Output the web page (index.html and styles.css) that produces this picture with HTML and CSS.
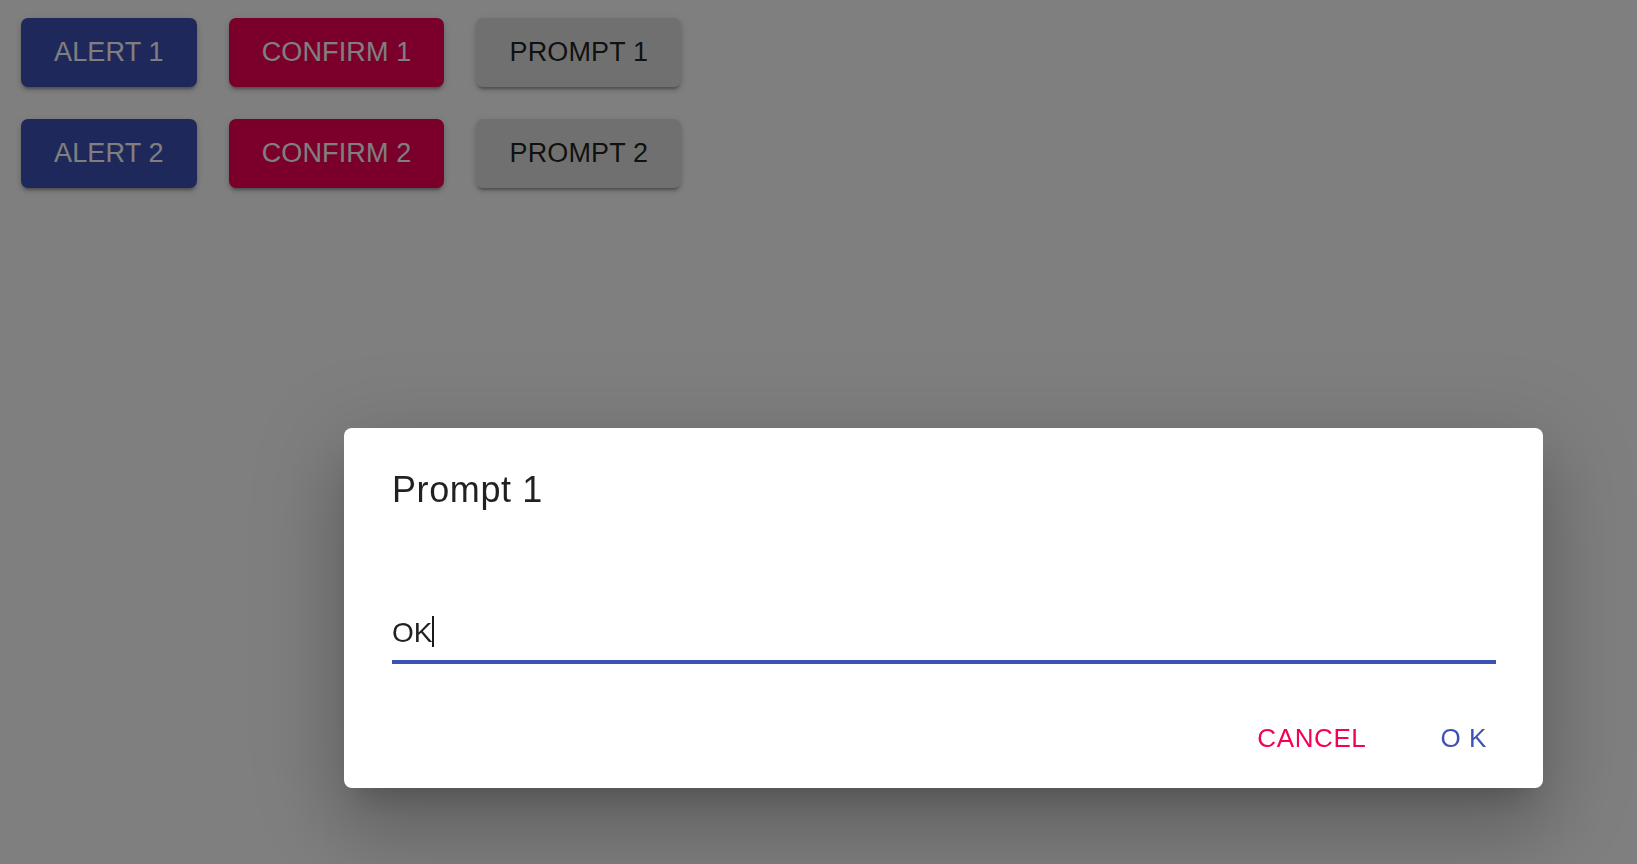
FILE: index.html
```html
<!DOCTYPE html>
<html lang="en">
<head>
<meta charset="utf-8">
<title>Dialogs</title>
<link rel="stylesheet" href="styles.css">
</head>
<body>
<main class="page">
  <div class="row">
    <button class="btn btn-primary">ALERT 1</button>
    <button class="btn btn-secondary">CONFIRM 1</button>
    <button class="btn btn-default">PROMPT 1</button>
  </div>
  <div class="row">
    <button class="btn btn-primary">ALERT 2</button>
    <button class="btn btn-secondary">CONFIRM 2</button>
    <button class="btn btn-default">PROMPT 2</button>
  </div>
</main>
<div class="backdrop"></div>
<div class="dialog" role="dialog">
  <h2 class="dialog-title">Prompt 1</h2>
  <div class="field">
    <span class="field-value">OK</span><span class="caret"></span>
  </div>
  <div class="actions">
    <button class="action action-cancel">CANCEL</button>
    <button class="action action-ok">O K</button>
  </div>
</div>
</body>
</html>
```

FILE: styles.css
```css
html, body {
  margin: 0;
  padding: 0;
  height: 100%;
  background: #ffffff;
  font-family: "Liberation Sans", Arial, sans-serif;
  overflow: hidden;
}

.page {
  display: flex;
  flex-direction: column;
  gap: 32px;
  padding: 18px 0 0 21px;
}

.row {
  display: flex;
  gap: 32px;
}

.btn {
  height: 69px;
  padding: 0 33px;
  border: none;
  border-radius: 7px;
  font-family: "Liberation Sans", Arial, sans-serif;
  font-size: 27px;
  line-height: 69px;
  letter-spacing: 0.15px;
  box-shadow: 0 4px 2px -2px rgba(0,0,0,0.2), 0 3px 4px 0 rgba(0,0,0,0.14), 0 2px 10px 0 rgba(0,0,0,0.12);
}

.btn-primary {
  background: #3f51b5;
  color: #ffffff;
}

.btn-secondary {
  background: #f50057;
  color: #ffffff;
}

.btn-default {
  background: #e0e0e0;
  color: rgba(0,0,0,0.87);
}

.backdrop {
  position: fixed;
  inset: 0;
  background: rgba(0,0,0,0.5);
}

.dialog {
  position: absolute;
  left: 344px;
  top: 428px;
  width: 1199px;
  height: 360px;
  box-sizing: border-box;
  padding: 41px 47px 0 48px;
  background: #ffffff;
  border-radius: 8px;
  display: flex;
  flex-direction: column;
  box-shadow: 0 20px 28px -14px rgba(0,0,0,0.2), 0 46px 72px 6px rgba(0,0,0,0.14), 0 18px 88px 16px rgba(0,0,0,0.12);
}

.dialog-title {
  margin: 0;
  font-size: 36px;
  font-weight: 400;
  line-height: 42px;
  letter-spacing: 0.6px;
  color: rgba(0,0,0,0.87);
}

.field {
  margin-top: 100px;
  padding-bottom: 9px;
  border-bottom: 4px solid #3f51b5;
  font-size: 28px;
  line-height: 36px;
  color: rgba(0,0,0,0.87);
  display: flex;
  align-items: baseline;
}

.caret {
  display: inline-block;
  width: 2px;
  height: 31px;
  background: #1a1a1a;
  align-self: baseline;
  position: relative;
  top: 5px;
}

.actions {
  margin-top: 59px;
  display: flex;
  justify-content: flex-end;
  gap: 74px;
  padding-right: 9px;
}

.action {
  border: none;
  background: transparent;
  padding: 0;
  font-family: "Liberation Sans", Arial, sans-serif;
  font-size: 26px;
  line-height: 30px;
  letter-spacing: 0.6px;
}

.action-cancel {
  color: #f50057;
}

.action-ok {
  color: #3f51b5;
}
```
